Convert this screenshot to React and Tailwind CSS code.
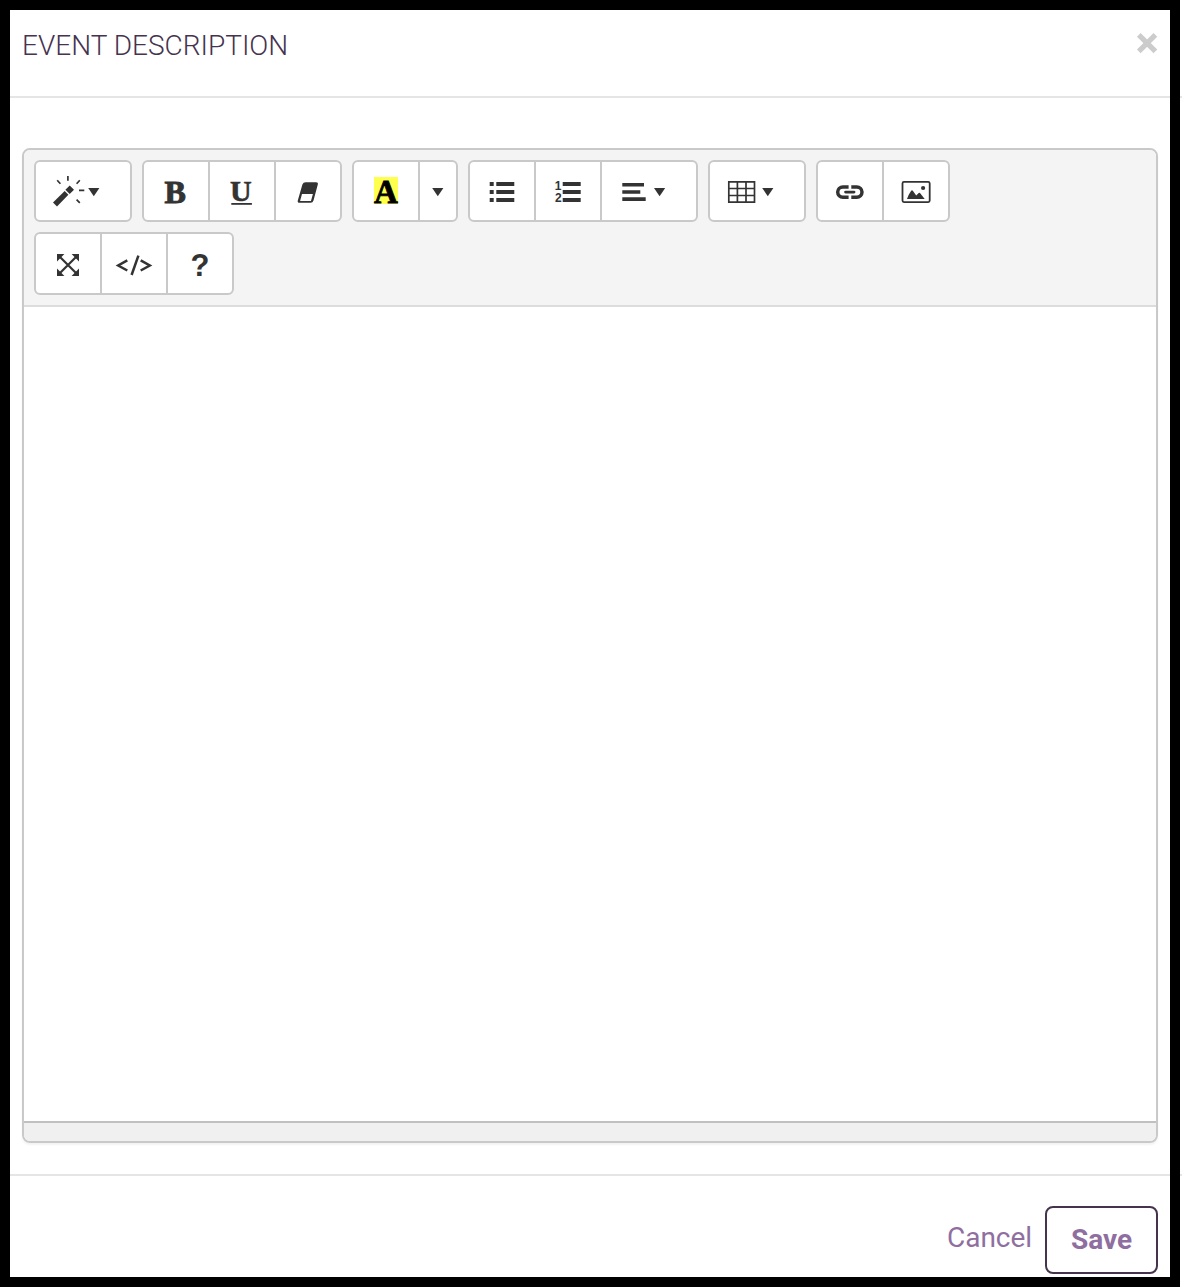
import React, { useState } from 'react';

const Group = ({ children, className = 'h-[62px]' }) => (
  <div
    className={`flex divide-x-2 divide-[#c9c9c9] overflow-hidden rounded-[6px] border-2 border-[#c9c9c9] bg-white ${className}`}
  >
    {children}
  </div>
);

const Tool = ({ label, width = 64, className = 'w-[64px]', children }) => (
  <button
    type="button"
    aria-label={label}
    className={`box-content flex h-full shrink-0 items-start text-[#333] ${className}`}
  >
    <svg width={width} height="58" viewBox={`0 0 ${width} 58`} fill="currentColor">
      {children}
    </svg>
  </button>
);

const Caret = ({ x = 52.2 }) => <path d={`M${x} 26h11.2l-5.6 8.2z`} />;

const App = () => {
  const [open, setOpen] = useState(true);
  const close = () => setOpen(false);

  if (!open) return null;

  return (
    <div className="relative flex h-[1288px] w-[1182px] flex-col overflow-hidden bg-white font-['Roboto',sans-serif]">
      <header className="flex h-[98px] shrink-0 items-start justify-between border-b-2 border-[#e5e5e5] pl-[22px] pr-[24px]">
        <h1 className="pt-[29px] text-[28px] leading-[34px] font-light text-[#45334f]">EVENT DESCRIPTION</h1>
        <button type="button" aria-label="Close" onClick={close} className="pt-[32px]">
          <svg width="22" height="22" viewBox="0 0 22 22" stroke="#ccc" strokeWidth="5.2">
            <path d="M2.8 2.8l16.6 16.6M19.4 2.8L2.8 19.4" />
          </svg>
        </button>
      </header>

      <main className="h-[1076px] shrink-0 pt-[50px] pr-[24px] pl-[22px]">
        <div className="flex h-[995px] flex-col overflow-hidden rounded-[8px] border-2 border-[#c9c9c9] shadow-[0_2px_2px_rgba(0,0,0,0.05)]">
          {/* Toolbar */}
          <div className="flex h-[157px] shrink-0 flex-wrap content-start gap-[10px] border-b-2 border-[#dcdcdc] bg-[#f4f4f4] p-[10px]">
            <Group>
              <Tool label="Style" width={94} className="w-[94px]">
                <path d="M33.7 23.4l4.3 4.3-4.3 4.3-4.3-4.3zM17 40.6L28.7 29l3.7 3.7L21 44.4z" />
                <path
                  d="M31.9 14v4.8M21.2 18.2l3.2 3.5M43.8 18.2l-3.2 3.5M43 28.4h5.3M40.6 37.6l3.2 3.2"
                  fill="none"
                  stroke="currentColor"
                  strokeWidth="1.7"
                />
                <Caret />
              </Tool>
            </Group>

            <Group>
              <Tool label="Bold">
                <text x="20.4" y="40.8" stroke="currentColor" strokeWidth="1" className="font-['Liberation_Serif',serif] text-[32px] font-bold">
                  B
                </text>
              </Tool>
              <Tool label="Underline">
                <text x="20" y="39.4" stroke="currentColor" strokeWidth="0.6" className="font-['Liberation_Serif',serif] text-[30px] font-bold">
                  U
                </text>
                <rect x="21.3" y="41" width="20.6" height="1.8" />
              </Tool>
              <Tool label="Remove font style">
                <path
                  fillRule="evenodd"
                  d="M29.6 20.3H40q2.4 0 1.8 2.3l-4.3 15.8q-.6 2.3-3 2.3H23.6q-2.4 0-1.8-2.3l4.6-15.8q.8-2.3 3.2-2.3zM26 32l-1.8 6.5q-.1.5.3.5h9.8q.6 0 .8-.5l1.8-6.5z"
                />
              </Tool>
            </Group>

            <Group>
              <Tool label="Recent color">
                <rect x="20" y="15" width="24" height="27" fill="#ffff4d" />
                <text x="20" y="41.4" fill="#000" stroke="#000" strokeWidth="0.8" className="font-['Liberation_Serif',serif] text-[33px] font-bold">
                  A
                </text>
              </Tool>
              <Tool label="More color" width={36} className="w-[36px]">
                <Caret x={12.2} />
              </Tool>
            </Group>

            <Group>
              <Tool label="Unordered list">
                <path d="M19.7 20h4v4h-4zM26.3 20h18v4h-18zM19.7 28h4v4h-4zM26.3 28h18v4h-18zM19.7 36h4v4h-4zM26.3 36h18v4h-18z" />
              </Tool>
              <Tool label="Ordered list">
                <path d="M26.7 20h18v4h-18zM26.7 28h18v4h-18zM26.7 36h18v4h-18z" />
                <g className="font-['Liberation_Sans',sans-serif] text-[12px] font-bold">
                  <text x="18.8" y="28">1</text>
                  <text x="19" y="40">2</text>
                </g>
              </Tool>
              <Tool label="Paragraph" width={94} className="w-[94px]">
                <path d="M20.3 21H42v3.6H20.3zM20.3 28.2h18v3.6h-18zM20.3 35.3h23.4v3.6H20.3z" />
                <Caret x={52} />
              </Tool>
            </Group>

            <Group>
              <Tool label="Table" width={94} className="w-[94px]">
                <path
                  d="M18.8 19.8h25.7v20.4H18.8zM27.4 19.8v20.4M36 19.8v20.4M18.8 26.5h25.7M18.8 33.5h25.7"
                  fill="none"
                  stroke="currentColor"
                  strokeWidth="1.7"
                />
                <Caret />
              </Tool>
            </Group>

            <Group>
              <Tool label="Link">
                <g fill="none" stroke="currentColor" strokeWidth="3.5">
                  <path d="M30.6 24.9h-5.7a5.2 5.2 0 0 0 0 10.4h5.7M33.3 24.9h5.5a5.2 5.2 0 0 1 0 10.4h-5.5" />
                  <path d="M27.6 30.1h8.4" strokeWidth="2.9" strokeLinecap="round" />
                </g>
              </Tool>
              <Tool label="Picture">
                <rect x="18.5" y="19.9" width="27.2" height="20.2" rx="1.5" fill="none" stroke="currentColor" strokeWidth="1.8" />
                <path d="M23 36.9L24.6 33l2.4-4q1-1.4 2 0l3.2 4.4 2.5-2.4q1-.7 1.7.4l4.3 5.5z" />
                <circle cx="39.1" cy="26" r="2.1" />
              </Tool>
            </Group>

            <Group className="h-[63px]">
              <Tool label="Full screen">
                <path d="M21 20h7.4L21 27.4zM43 20v7.4L35.6 20zM21 42v-7.4l7.4 7.4zM43 42h-7.4l7.4-7.4z" />
                <path d="M23 22l18 18M41 22L23 40" stroke="currentColor" strokeWidth="2.2" />
              </Tool>
              <Tool label="Code view">
                <path
                  d="M25.3 26.4L16.2 31.5l9.1 5M38.7 26.4l9.1 5.1-9.1 5M36.4 21.6L29.6 41"
                  fill="none"
                  stroke="currentColor"
                  strokeWidth="2.5"
                />
              </Tool>
              <Tool label="Help">
                <text x="22.6" y="42" className="font-['Liberation_Sans',sans-serif] text-[31px] font-bold">
                  ?
                </text>
              </Tool>
            </Group>
          </div>

          {/* Editing area */}
          <div contentEditable suppressContentEditableWarning className="flex-1 bg-white outline-none" />

          {/* Resize bar */}
          <div className="h-[20px] shrink-0 border-t-2 border-[#c0c0c0] bg-[#f0f0f0]" />
        </div>
      </main>

      <footer className="flex flex-1 items-start justify-end border-t-2 border-[#e5e5e5] pt-[30px] pr-[24px] text-[28px] text-[#8f6f9f]">
        <button type="button" onClick={close} className="mr-[13px] pt-[15px] leading-[34px] tracking-[-0.05px]">
          Cancel
        </button>
        <button
          type="button"
          className="h-[68px] w-[113px] rounded-[8px] border-2 border-[#46344f] leading-[34px] font-bold"
        >
          Save
        </button>
      </footer>

      {/* Frame drawn over the dialog */}
      <div className="pointer-events-none absolute top-0 left-0 h-[1287px] w-[1180px] border-10 border-black" />
    </div>
  );
};

export default App;
